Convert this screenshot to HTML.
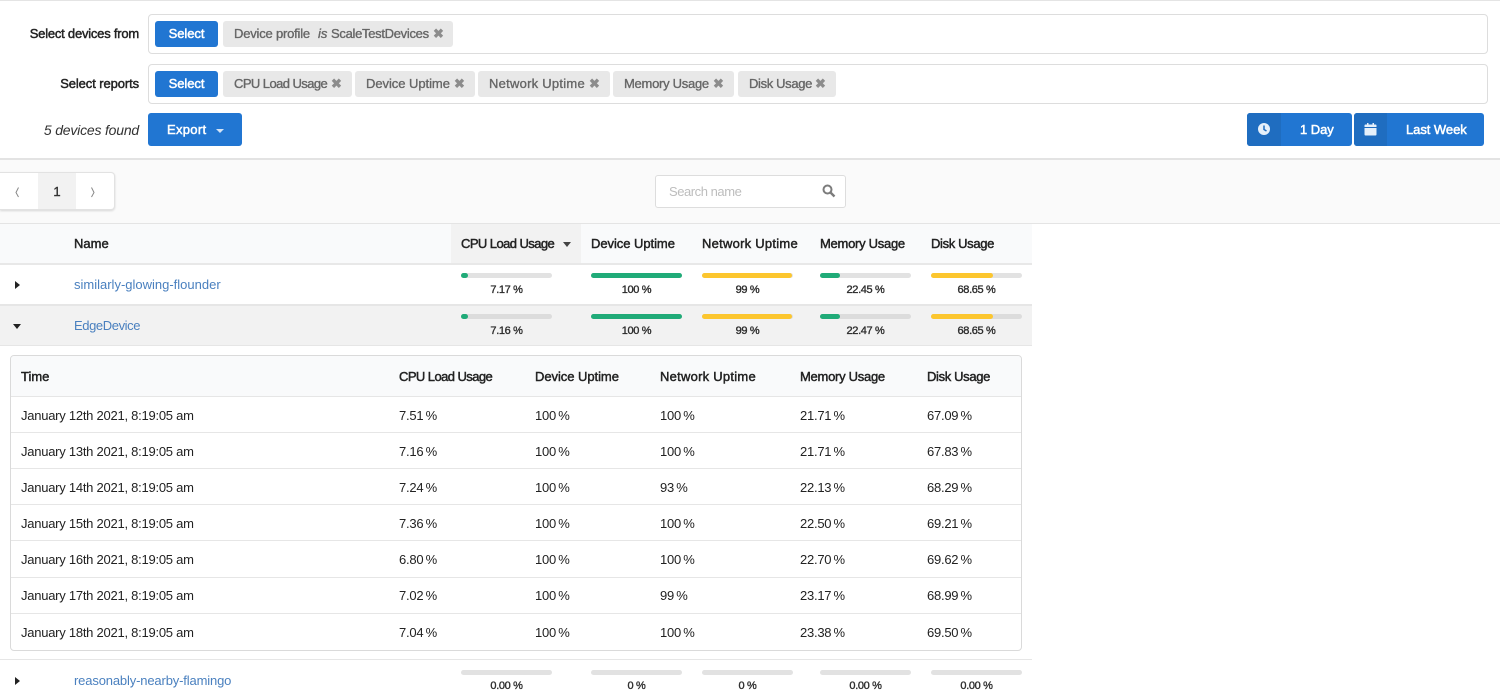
<!DOCTYPE html>
<html><head><meta charset="utf-8">
<style>
html,body{margin:0;padding:0;background:#fff}
#p{position:relative;width:1500px;height:700px;overflow:hidden;background:#fff;font-family:"Liberation Sans",Arial,sans-serif;font-size:13px;color:#222}
#p div,#p span.t,#p svg{position:absolute}
.t{white-space:nowrap;line-height:16px;height:16px}
.b{margin-top:1px;-webkit-text-stroke:.45px #222;color:#222}
.h{margin-top:1px;-webkit-text-stroke:.45px #222;color:#222;font-size:13px}
.r{margin-top:1px;color:#222;letter-spacing:-.25px;word-spacing:-1.1px}
.d{margin-top:1px;color:#222;letter-spacing:-.25px}
.c{text-align:center;font-size:11px;letter-spacing:-.35px;word-spacing:0;-webkit-text-stroke:.35px #2c2c2c;color:#2c2c2c}
.btn{background:#2176d2;border-radius:3px}
.wb{color:#fff;-webkit-text-stroke:.5px #fff;letter-spacing:-.05px;text-align:center}
.chip{background:#e8e8e8;border-radius:3px;height:26px;top:0}
.ct{margin-top:1px;color:#666;-webkit-text-stroke:.35px #666}
.x{color:#8c8c8c;font-weight:bold;font-size:13px}
.track{height:5px;background:#e2e2e2;border-radius:3px;width:91px}
.fill{height:5px;border-radius:3px;left:0;top:0}
.g{background:#20ab78}.y{background:#fcc62e}
.line{height:1px;background:#e6e6e6}
.lnk{margin-top:1px;color:#4a80bf;letter-spacing:0}
.l1{letter-spacing:-.57px}.l2{letter-spacing:-.05px}.l3{letter-spacing:.25px}.l4{letter-spacing:-.27px}.l5{letter-spacing:-.35px}
</style></head><body>
<div id="p">
<!-- toolbar -->
<div style="left:0;top:0;width:1500px;height:158px;background:#fff;border-top:1px solid #e4e4e4;box-sizing:border-box"></div>
<div style="left:0;top:158px;width:1500px;height:65px;background:#fafafa"></div>
<div style="left:0;top:158px;width:1500px;height:2px;background:#e3e3e3"></div>
<div class="line" style="left:0;top:223px;width:1500px;background:#e4e4e4"></div>

<span class="t b" style="right:1361px;top:25px;letter-spacing:-.22px">Select devices from</span>
<div style="left:148px;top:14px;width:1340px;height:40px;border:1px solid #ddd;border-radius:4px;box-sizing:border-box;background:#fff"></div>
<div class="btn" style="left:155px;top:21px;width:63px;height:26px"></div>
<span class="t wb" style="left:155px;top:26px;width:63px">Select</span>
<div class="chip" style="left:223px;top:21px;width:230px"></div>
<span class="t ct" style="left:234px;top:25px;letter-spacing:-.2px">Device profile</span>
<span class="t ct" style="left:318px;top:25px;font-style:italic">is</span>
<span class="t ct" style="left:331px;top:25px;letter-spacing:-.3px">ScaleTestDevices</span>
<span class="t x" style="left:433px;top:26px">✖</span>

<span class="t b" style="right:1361px;top:75px;letter-spacing:-.1px">Select reports</span>
<div style="left:148px;top:64px;width:1340px;height:40px;border:1px solid #ddd;border-radius:4px;box-sizing:border-box;background:#fff"></div>
<div class="btn" style="left:155px;top:71px;width:63px;height:26px"></div>
<span class="t wb" style="left:155px;top:76px;width:63px">Select</span>
<div class="chip" style="left:223px;top:71px;width:129px"></div>
<span class="t ct l1" style="left:234px;top:75px">CPU Load Usage</span><span class="t x" style="left:331px;top:76px">✖</span>
<div class="chip" style="left:355px;top:71px;width:120px"></div>
<span class="t ct l2" style="left:366px;top:75px">Device Uptime</span><span class="t x" style="left:454px;top:76px">✖</span>
<div class="chip" style="left:478px;top:71px;width:132px"></div>
<span class="t ct l3" style="left:489px;top:75px">Network Uptime</span><span class="t x" style="left:589px;top:76px">✖</span>
<div class="chip" style="left:613px;top:71px;width:121px"></div>
<span class="t ct l4" style="left:624px;top:75px">Memory Usage</span><span class="t x" style="left:713px;top:76px">✖</span>
<div class="chip" style="left:738px;top:71px;width:98px"></div>
<span class="t ct l5" style="left:749px;top:75px">Disk Usage</span><span class="t x" style="left:815px;top:76px">✖</span>

<span class="t" style="right:1361px;top:122px;font-style:italic;font-size:14px;letter-spacing:-.2px;color:#333">5 devices found</span>
<div class="btn" style="left:148px;top:113px;width:94px;height:33px"></div>
<span class="t wb" style="left:167px;top:122px;letter-spacing:.3px">Export</span>
<div style="left:216px;top:129px;width:0;height:0;border-left:4px solid transparent;border-right:4px solid transparent;border-top:4px solid #d5e4f5"></div>

<div class="btn" style="left:1247px;top:113px;width:105px;height:33px"></div>
<div style="left:1247px;top:113px;width:34px;height:33px;background:#1f6dc0;border-radius:3px 0 0 3px"></div>
<svg style="left:1257px;top:122px" width="14" height="14" viewBox="0 0 14 14"><circle cx="7" cy="7" r="6" fill="#e6f0fa"/><path d="M7 3.5V7.5L9.5 9" stroke="#1f6dc0" stroke-width="1.5" fill="none"/></svg>
<span class="t wb" style="left:1300px;top:122px">1 Day</span>

<div class="btn" style="left:1354px;top:113px;width:130px;height:33px"></div>
<div style="left:1354px;top:113px;width:33px;height:33px;background:#1f6dc0;border-radius:3px 0 0 3px"></div>
<svg style="left:1364px;top:122px" width="13" height="14" viewBox="0 0 13 14"><path d="M1.5 2.5H11.5A1 1 0 0 1 12.5 3.5V5H.5V3.5A1 1 0 0 1 1.500 2.500ZM.5 6H12.500V12.500A1 1 0 0 1 11.500 13.500H1.500A1 1 0 0 1 .5 12.500Z" fill="#e6f0fa"/><rect x="3" y="1" width="1.500" height="2.500" fill="#e6f0fa"/><rect x="8.500" y="1" width="1.500" height="2.500" fill="#e6f0fa"/></svg>
<span class="t wb" style="left:1406px;top:122px">Last Week</span>

<!-- pagination -->
<div style="left:0;top:172px;width:115px;height:38px;background:#fff;border:1px solid #e2e2e2;border-left:0;border-radius:0 4px 4px 0;box-sizing:border-box;box-shadow:0 1px 2px rgba(0,0,0,.14)"></div>
<div style="left:38px;top:173px;width:38px;height:36px;background:#f2f2f2"></div>
<svg style="left:13px;top:186px" width="8" height="12" viewBox="0 0 8 12"><path d="M5.500 1.500L3 6.500L5.500 11" fill="none" stroke="#888" stroke-width="1"/></svg>
<svg style="left:89px;top:186px" width="8" height="12" viewBox="0 0 8 12"><path d="M2.500 1.500L5 6.500L2.500 11" fill="none" stroke="#888" stroke-width="1"/></svg>
<span class="t" style="left:38px;top:184px;width:38px;text-align:center;-webkit-text-stroke:.4px #333;color:#333">1</span>

<!-- search -->
<div style="left:655px;top:175px;width:191px;height:33px;background:#fff;border:1px solid #ddd;border-radius:3px;box-sizing:border-box"></div>
<span class="t" style="left:669px;top:184px;color:#bdbdbd;letter-spacing:-.45px">Search name</span>
<svg style="left:821px;top:183px" width="15" height="15" viewBox="0 0 15 15"><circle cx="6.500" cy="6.500" r="4" fill="none" stroke="#7c7c7c" stroke-width="2"/><path d="M9.500 9.500L13.500 13.500" stroke="#7c7c7c" stroke-width="2.400"/></svg>

<!-- main table header -->
<div style="left:0;top:224px;width:1032px;height:39px;background:#f9fafb"></div>
<div style="left:451px;top:224px;width:130px;height:39px;background:#f2f2f2"></div>
<div style="left:0;top:263px;width:1032px;height:2px;background:#e8e8e8"></div>
<span class="t h" style="left:74px;top:235px">Name</span>
<span class="t h l1" style="left:461px;top:235px">CPU Load Usage</span>
<div style="left:563px;top:242px;width:0;height:0;border-left:4.500px solid transparent;border-right:4.500px solid transparent;border-top:5px solid #444"></div>
<span class="t h l2" style="left:591px;top:235px">Device Uptime</span>
<span class="t h l3" style="left:702px;top:235px">Network Uptime</span>
<span class="t h l4" style="left:820px;top:235px">Memory Usage</span>
<span class="t h l5" style="left:931px;top:235px">Disk Usage</span>

<!-- row 1 -->
<div class="line" style="left:0;top:304px;width:1032px;height:2px"></div>
<div style="left:15px;top:281px;width:0;height:0;border-top:4px solid transparent;border-bottom:4px solid transparent;border-left:5px solid #222"></div>
<span class="t lnk" style="left:74px;top:276px">similarly-glowing-flounder</span>
<div class="track" style="left:461px;top:273px"><div class="fill g" style="width:7px"></div></div>
<div class="track" style="left:591px;top:273px"><div class="fill g" style="width:91px"></div></div>
<div class="track" style="left:702px;top:273px"><div class="fill y" style="width:90px"></div></div>
<div class="track" style="left:820px;top:273px"><div class="fill g" style="width:20px"></div></div>
<div class="track" style="left:931px;top:273px"><div class="fill y" style="width:62px"></div></div>
<span class="t c" style="left:461px;top:282px;width:91px">7.17 %</span>
<span class="t c" style="left:591px;top:282px;width:91px">100 %</span>
<span class="t c" style="left:702px;top:282px;width:91px">99 %</span>
<span class="t c" style="left:820px;top:282px;width:91px">22.45 %</span>
<span class="t c" style="left:931px;top:282px;width:91px">68.65 %</span>

<!-- row 2 -->
<div style="left:0;top:306px;width:1032px;height:39px;background:#f2f2f2"></div>
<div class="line" style="left:0;top:345px;width:1032px"></div>
<div style="left:13px;top:324px;width:0;height:0;border-left:4px solid transparent;border-right:4px solid transparent;border-top:5px solid #222"></div>
<span class="t lnk" style="left:74px;top:317px;letter-spacing:-.4px">EdgeDevice</span>
<div class="track" style="left:461px;top:314px;background:#dcdcdc"><div class="fill g" style="width:7px"></div></div>
<div class="track" style="left:591px;top:314px;background:#dcdcdc"><div class="fill g" style="width:91px"></div></div>
<div class="track" style="left:702px;top:314px;background:#dcdcdc"><div class="fill y" style="width:90px"></div></div>
<div class="track" style="left:820px;top:314px;background:#dcdcdc"><div class="fill g" style="width:20px"></div></div>
<div class="track" style="left:931px;top:314px;background:#dcdcdc"><div class="fill y" style="width:62px"></div></div>
<span class="t c" style="left:461px;top:323px;width:91px">7.16 %</span>
<span class="t c" style="left:591px;top:323px;width:91px">100 %</span>
<span class="t c" style="left:702px;top:323px;width:91px">99 %</span>
<span class="t c" style="left:820px;top:323px;width:91px">22.47 %</span>
<span class="t c" style="left:931px;top:323px;width:91px">68.65 %</span>

<!-- sub table -->
<div style="left:10px;top:355px;width:1012px;height:296px;border:1px solid #dadada;border-radius:4px;box-sizing:border-box;background:#fff"></div>
<div style="left:11px;top:356px;width:1010px;height:40px;background:#f9fafb;border-radius:3px 3px 0 0"></div>
<div class="line" style="left:11px;top:396px;width:1010px"></div>
<div class="line" style="left:11px;top:432px;width:1010px"></div>
<div class="line" style="left:11px;top:468px;width:1010px"></div>
<div class="line" style="left:11px;top:504px;width:1010px"></div>
<div class="line" style="left:11px;top:540px;width:1010px"></div>
<div class="line" style="left:11px;top:577px;width:1010px"></div>
<div class="line" style="left:11px;top:613px;width:1010px"></div>

<span class="t h" style="left:21px;top:368px">Time</span>
<span class="t h l1" style="left:399px;top:368px">CPU Load Usage</span>
<span class="t h l2" style="left:535px;top:368px">Device Uptime</span>
<span class="t h l3" style="left:660px;top:368px">Network Uptime</span>
<span class="t h l4" style="left:800px;top:368px">Memory Usage</span>
<span class="t h l5" style="left:927px;top:368px">Disk Usage</span>

<span class="t d" style="left:21px;top:407px">January 12th 2021, 8:19:05 am</span><span class="t r" style="left:399px;top:407px">7.51 %</span><span class="t r" style="left:535px;top:407px">100 %</span><span class="t r" style="left:660px;top:407px">100 %</span><span class="t r" style="left:800px;top:407px">21.71 %</span><span class="t r" style="left:927px;top:407px">67.09 %</span>
<span class="t d" style="left:21px;top:443px">January 13th 2021, 8:19:05 am</span><span class="t r" style="left:399px;top:443px">7.16 %</span><span class="t r" style="left:535px;top:443px">100 %</span><span class="t r" style="left:660px;top:443px">100 %</span><span class="t r" style="left:800px;top:443px">21.71 %</span><span class="t r" style="left:927px;top:443px">67.83 %</span>
<span class="t d" style="left:21px;top:479px">January 14th 2021, 8:19:05 am</span><span class="t r" style="left:399px;top:479px">7.24 %</span><span class="t r" style="left:535px;top:479px">100 %</span><span class="t r" style="left:660px;top:479px">93 %</span><span class="t r" style="left:800px;top:479px">22.13 %</span><span class="t r" style="left:927px;top:479px">68.29 %</span>
<span class="t d" style="left:21px;top:515px">January 15th 2021, 8:19:05 am</span><span class="t r" style="left:399px;top:515px">7.36 %</span><span class="t r" style="left:535px;top:515px">100 %</span><span class="t r" style="left:660px;top:515px">100 %</span><span class="t r" style="left:800px;top:515px">22.50 %</span><span class="t r" style="left:927px;top:515px">69.21 %</span>
<span class="t d" style="left:21px;top:551px">January 16th 2021, 8:19:05 am</span><span class="t r" style="left:399px;top:551px">6.80 %</span><span class="t r" style="left:535px;top:551px">100 %</span><span class="t r" style="left:660px;top:551px">100 %</span><span class="t r" style="left:800px;top:551px">22.70 %</span><span class="t r" style="left:927px;top:551px">69.62 %</span>
<span class="t d" style="left:21px;top:587px">January 17th 2021, 8:19:05 am</span><span class="t r" style="left:399px;top:587px">7.02 %</span><span class="t r" style="left:535px;top:587px">100 %</span><span class="t r" style="left:660px;top:587px">99 %</span><span class="t r" style="left:800px;top:587px">23.17 %</span><span class="t r" style="left:927px;top:587px">68.99 %</span>
<span class="t d" style="left:21px;top:624px">January 18th 2021, 8:19:05 am</span><span class="t r" style="left:399px;top:624px">7.04 %</span><span class="t r" style="left:535px;top:624px">100 %</span><span class="t r" style="left:660px;top:624px">100 %</span><span class="t r" style="left:800px;top:624px">23.38 %</span><span class="t r" style="left:927px;top:624px">69.50 %</span>

<!-- row 3 -->
<div class="line" style="left:0;top:659px;width:1032px"></div>
<div style="left:15px;top:677px;width:0;height:0;border-top:4px solid transparent;border-bottom:4px solid transparent;border-left:5px solid #222"></div>
<span class="t lnk" style="left:74px;top:672px;letter-spacing:-.15px">reasonably-nearby-flamingo</span>
<div class="track" style="left:461px;top:670px"></div>
<div class="track" style="left:591px;top:670px"></div>
<div class="track" style="left:702px;top:670px"></div>
<div class="track" style="left:820px;top:670px"></div>
<div class="track" style="left:931px;top:670px"></div>
<span class="t c" style="left:461px;top:678px;width:91px">0.00 %</span>
<span class="t c" style="left:591px;top:678px;width:91px">0 %</span>
<span class="t c" style="left:702px;top:678px;width:91px">0 %</span>
<span class="t c" style="left:820px;top:678px;width:91px">0.00 %</span>
<span class="t c" style="left:931px;top:678px;width:91px">0.00 %</span>
</div>
</body></html>
